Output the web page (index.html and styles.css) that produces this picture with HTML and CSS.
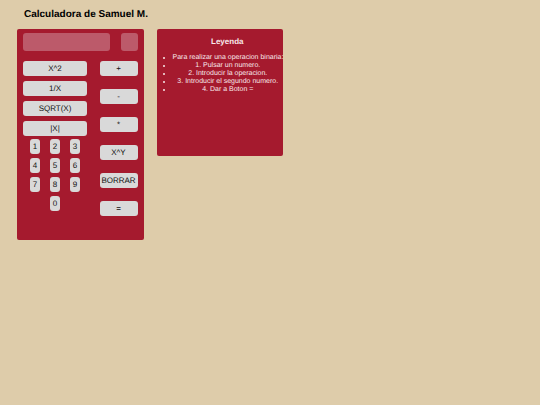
FILE: index.html
```html
<!DOCTYPE html>
<html lang="es">
<head>
  <meta charset="UTF-8" />
  <meta name="viewport" content="width=device-width, initial-scale=1" />
  <title>Calculadora</title>
  <link rel="stylesheet" href="styles.css">
</head>
<body>
  <h1 class="titulo">Calculadora de Samuel M.</h1>
  <main class="contenido">
    <section class="panel calculadora">
      <div class="pantallas">
        <textarea id="pantalla" class="pantalla" aria-label="Pantalla" readonly></textarea>
        <textarea id="operador" class="pantalla operador" aria-label="Operador" readonly></textarea>
      </div>
      <div class="teclado">
        <div class="izquierda">
          <div class="unarias">
            <button class="boton">X^2</button>
            <button class="boton">1/X</button>
            <button class="boton">SQRT(X)</button>
            <button class="boton">|X|</button>
          </div>
          <div class="numeros">
            <button class="boton">1</button>
            <button class="boton">2</button>
            <button class="boton">3</button>
            <button class="boton">4</button>
            <button class="boton">5</button>
            <button class="boton">6</button>
            <button class="boton">7</button>
            <button class="boton">8</button>
            <button class="boton">9</button>
            <button class="boton cero">0</button>
          </div>
        </div>
        <div class="binarias">
          <button class="boton">+</button>
          <button class="boton">-</button>
          <button class="boton">*</button>
          <button class="boton">X^Y</button>
          <button class="boton">BORRAR</button>
          <button class="boton">=</button>
        </div>
      </div>
    </section>

    <section class="panel leyenda">
      <h2 class="subtitulo">Leyenda</h2>
      <ul class="pasos">
        <li>Para realizar una operacion binaria:</li>
        <li>1. Pulsar un numero.</li>
        <li>2. Introducir la operacion.</li>
        <li>3. Introducir el segundo numero.</li>
        <li>4. Dar a Boton =</li>
      </ul>
    </section>
  </main>
</body>
</html>
```

FILE: styles.css
```css
* {
  box-sizing: border-box;
}
body {
  margin: 0;
  padding: 8px 17px;
  background-color: #deccaa;
  font-family: "Liberation Sans", Arial, sans-serif;
  text-rendering: geometricPrecision;
}
.titulo {
  margin: 0 0 8px;
  padding-left: 7px;
  font-size: 10px;
  line-height: 13px;
}
.contenido {
  display: flex;
  align-items: flex-start;
  gap: 13px;
}
.panel {
  flex: 0 0 25%;
  min-width: 0;
  border-radius: 2px;
  background-color: #a51a2e;
}
.calculadora {
  min-height: 211px;
  padding: 4px 6px;
}
.pantallas {
  display: flex;
  gap: 11px;
  margin-bottom: 10px;
}
.pantalla {
  flex: 1;
  min-width: 0;
  height: 18px;
  padding: 2px;
  border: none;
  border-radius: 3px;
  background-color: #bc5a6a;
  color: #fff;
  font-family: inherit;
  font-size: 8px;
  resize: none;
}
.operador {
  flex: 0 0 17px;
}
.teclado {
  display: flex;
  justify-content: space-between;
}
.boton {
  height: 15px;
  padding: 0;
  border: none;
  border-radius: 3px;
  background-color: #d9d9d9;
  color: #111;
  font-family: inherit;
  font-size: 8px;
  line-height: 15px;
  text-align: center;
  text-rendering: inherit;
  cursor: pointer;
}
.izquierda {
  flex: 0 0 64px;
}
.unarias {
  display: grid;
  gap: 5px;
  margin-bottom: 3px;
}
.numeros {
  display: grid;
  grid-template-columns: repeat(3, 10px);
  justify-content: center;
  gap: 4px 10px;
}
.cero {
  grid-column: 2;
}
.binarias {
  flex: 0 0 38px;
  display: grid;
  align-content: start;
  gap: 13px;
}
.leyenda {
  min-height: 127px;
  padding-top: 8px;
  color: #f8e8ea;
  text-align: center;
}
.subtitulo {
  margin: 0 0 7px;
  padding-left: 15px;
  font-size: 8px;
  line-height: 10px;
}
.pasos {
  margin: 0;
  padding-left: 16px;
  font-size: 7px;
  line-height: 8px;
  white-space: nowrap;
}
```
